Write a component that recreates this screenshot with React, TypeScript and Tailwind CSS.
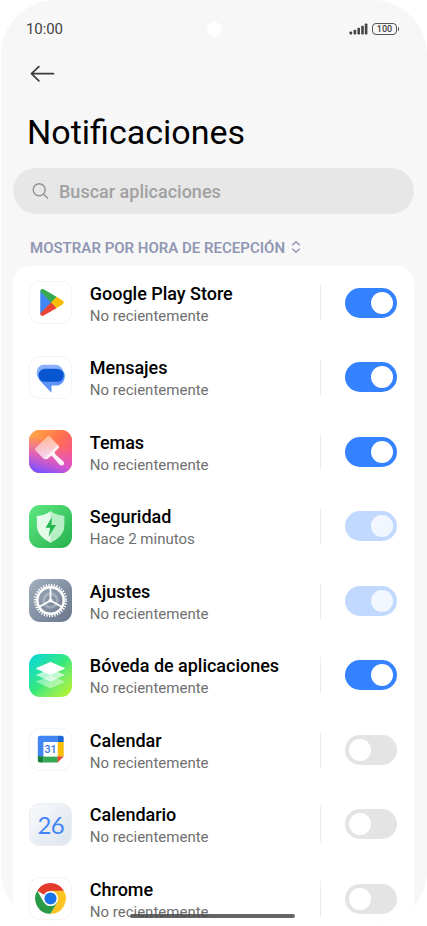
import type { ReactNode } from 'react'
import clsx from 'clsx'

type SwitchState = 'on' | 'locked' | 'off'

type AppRow = {
  name: string
  status: string
  state: SwitchState
  icon: ReactNode
}

function PlayIcon() {
  return (
    <svg viewBox="0 0 44 44" className="size-full">
      <path d="M11.500 10.200v24l12-12.400z" fill="#4285f4" />
      <path d="M11.500 10.700c0-2.200 1.700-3.200 3.500-2.200l13.500 7.800-5.700 5.900z" fill="#34a853" />
      <path d="M11.500 33.200c0 2.200 1.700 3.200 3.500 2.200l13.500-7.800-5.700-5.900z" fill="#ea4335" />
      <path d="M28.300 16.200l6 3.700c1.700 1.100 1.700 3.100 0 4.100l-6 3.700-5.700-5.700z" fill="#fbbc04" />
    </svg>
  )
}

function MessagesIcon() {
  return (
    <svg viewBox="0 0 44 44" className="size-full">
      <path d="M15 9h12.500a7.300 7.300 0 0 1 7.200 6.500L30 25H12.500a8.500 8.500 0 0 1-4.600-8.500A7.400 7.400 0 0 1 15 9z" fill="#8ab0fb" />
      <path d="M33 14a7 7 0 0 1 3.700 6.200c0 6-4 10.100-9.200 10.100H23v7.400L10 24z" fill="#5f93f8" />
      <rect x="9.700" y="13" width="25.800" height="13.400" rx="6.700" fill="#0957d0" />
    </svg>
  )
}

function ThemesIcon() {
  return (
    <svg viewBox="0 0 44 44" className="size-full">
      <defs>
        <linearGradient id="themes-bg" x1="0" y1="0" x2="1" y2="0.7">
          <stop offset="0" stopColor="#ffae43" />
          <stop offset="0.55" stopColor="#ff724d" />
          <stop offset="1" stopColor="#f8528d" />
        </linearGradient>
        <linearGradient id="themes-low" x1="0.6" y1="0.3" x2="0.35" y2="1">
          <stop offset="0" stopColor="#e45cd6" stopOpacity="0" />
          <stop offset="0.55" stopColor="#d256dd" stopOpacity="0.75" />
          <stop offset="1" stopColor="#7d51ff" />
        </linearGradient>
        <linearGradient id="themes-brush" x1="0.3" y1="0" x2="0.8" y2="1">
          <stop offset="0" stopColor="#fff" stopOpacity="0.4" />
          <stop offset="1" stopColor="#fff" stopOpacity="0.85" />
        </linearGradient>
      </defs>
      <rect width="44" height="44" fill="url(#themes-bg)" />
      <rect width="44" height="44" fill="url(#themes-low)" />
      <path d="M6.700 18.500L18.600 7q1.500-1.500 3 0L30.300 16q1.200 1.500 0 2.800L17.700 29.500q-1.500 1-2.900-.3L6.600 21q-1.200-1.200.1-2.500z" fill="url(#themes-brush)" />
      <path d="M29.800 15.500q1.300 1.600 0 3l-3 3.300q-1.100 1.600.3 3.200l7.700 6.700c3 3-.800 6.400-3.700 3.700l-6.800-8q-1.400-1.400-2.900-.1l-2.300 2q-1.800 1.300-3.300-.1z" fill="#fff2f8" />
    </svg>
  )
}

function SecurityIcon() {
  return (
    <svg viewBox="0 0 44 44" className="size-full">
      <path d="M22 6.500c4 3 8.500 4.500 14 4.700V21c0 8-6 13.500-14 17.500C14 34.500 8 29 8 21v-9.800c5.500-.2 10-1.700 14-4.700z" fill="#e4fbe9" />
      <path d="M22 6.500c4 3 8.500 4.500 14 4.700V21c0 8-6 13.500-14 17.500z" fill="#b5efc3" />
      <path d="M23.600 12.300l-6.700 11h4.700l-1.600 9.300 7.700-12.200h-4.800z" fill="#25b851" />
    </svg>
  )
}

function SettingsIcon() {
  return (
    <svg viewBox="0 0 44 44" className="size-full" fill="none">
      <circle cx="22" cy="22" r="7" stroke="#fff" strokeOpacity="0.25" strokeWidth="3" />
      <circle cx="22" cy="22" r="15.800" stroke="#fff" strokeWidth="2.400" strokeDasharray="1.350 1.408" />
      <circle cx="22" cy="22" r="13.500" stroke="#fff" strokeWidth="2.500" />
      <path d="M22 22V9M22 22L10.700 28.500M22 22l11.300 6.500" stroke="#fff" strokeWidth="1.800" />
      <circle cx="22" cy="22" r="2" fill="#fff" />
    </svg>
  )
}

function VaultIcon() {
  return (
    <svg viewBox="0 0 44 44" className="size-full" fill="#fff" stroke="#fff" strokeLinejoin="round">
      <path d="M22 22l15 6.500L22 35.200 7 28.500z" fillOpacity="0.45" stroke="none" />
      <path d="M22 15l15 6.500L22 28.200 7 21.500z" fillOpacity="0.65" stroke="none" />
      <path d="M22 8.500l14.500 6.300L22 21.100 7.500 14.800z" strokeWidth="0.800" />
    </svg>
  )
}

function GoogleCalendarIcon() {
  return (
    <svg viewBox="0 0 44 44" className="size-full">
      <path d="M11 8h18v6.500H9V10a2 2 0 0 1 2-2z" fill="#4285f4" />
      <path d="M9 14h6v15.500H9z" fill="#4285f4" />
      <path d="M29 8h4.500a2 2 0 0 1 2 2v4.500H29z" fill="#1967d2" />
      <path d="M29.200 14.300h6.300v14.900h-6.300z" fill="#fbbc04" />
      <path d="M9 29h6v6.300h-4a2 2 0 0 1-2-2z" fill="#188038" />
      <path d="M15 29h14.500v6.300H15z" fill="#34a853" />
      <path d="M29.200 29.200h6.300l-6.300 6.100z" fill="#ea4335" />
      <path d="M15 14.300h14.200v14.900H15z" fill="#fff" />
      <text x="22" y="25.700" textAnchor="middle" fontFamily="Roboto, sans-serif" fontSize="11" fontWeight="500" fill="#3478e8">
        31
      </text>
    </svg>
  )
}

function ChromeIcon() {
  return (
    <svg viewBox="0 0 44 44" className="size-full">
      <path d="M22 22L8.400 14.100A15.700 15.700 0 0 1 35.600 14.100z" fill="#e33b2e" />
      <path d="M22 14.100h13.600A15.700 15.700 0 0 1 22 37.700l6.900-11.800z" fill="#fdc422" />
      <path d="M15.100 25.900L8.400 14.100A15.700 15.700 0 0 0 22 37.700l6.900-11.800z" fill="#2a9a48" />
      <circle cx="22" cy="22" r="7.800" fill="#fff" />
      <circle cx="22" cy="22" r="6.200" fill="#1a73e8" />
    </svg>
  )
}

function Tile({ className, children }: { className: string; children: ReactNode }) {
  return <div className={clsx('size-[43px] shrink-0 overflow-hidden rounded-[11px]', className)}>{children}</div>
}

const whiteTile = 'inset-ring inset-ring-[#f5f5f5] bg-white'

const apps: AppRow[] = [
  { name: 'Google Play Store', status: 'No recientemente', state: 'on', icon: <Tile className={whiteTile}><PlayIcon /></Tile> },
  { name: 'Mensajes', status: 'No recientemente', state: 'on', icon: <Tile className={whiteTile}><MessagesIcon /></Tile> },
  { name: 'Temas', status: 'No recientemente', state: 'on', icon: <Tile className="bg-[#ff724d]"><ThemesIcon /></Tile> },
  {
    name: 'Seguridad',
    status: 'Hace 2 minutos',
    state: 'locked',
    icon: <Tile className="bg-linear-to-br from-[#5ee882] to-[#22b14c]"><SecurityIcon /></Tile>,
  },
  {
    name: 'Ajustes',
    status: 'No recientemente',
    state: 'locked',
    icon: <Tile className="bg-linear-to-br from-[#a3b0c1] to-[#68758a]"><SettingsIcon /></Tile>,
  },
  {
    name: 'Bóveda de aplicaciones',
    status: 'No recientemente',
    state: 'on',
    icon: <Tile className="bg-linear-to-br from-[#08d5dd] via-[#35e878] to-[#bdf500]"><VaultIcon /></Tile>,
  },
  { name: 'Calendar', status: 'No recientemente', state: 'off', icon: <Tile className={whiteTile}><GoogleCalendarIcon /></Tile> },
  {
    name: 'Calendario',
    status: 'No recientemente',
    state: 'off',
    icon: (
      <Tile className="flex items-center justify-center bg-linear-to-br from-[#f9fafc] to-[#dce4ed] inset-ring inset-ring-[#edf0f3]">
        <span className="pt-px font-[Lato,sans-serif] text-[24px] leading-none tracking-[-0.600px] text-[#4285f4]">26</span>
      </Tile>
    ),
  },
  { name: 'Chrome', status: 'No recientemente', state: 'off', icon: <Tile className={whiteTile}><ChromeIcon /></Tile> },
]

function Switch({ state }: { state: SwitchState }) {
  return (
    <div
      role="switch"
      aria-checked={state !== 'off'}
      className={clsx(
        'flex h-[30px] w-[52px] shrink-0 items-center rounded-full px-1',
        state === 'on' && 'justify-end bg-[#3482ff]',
        state === 'locked' && 'justify-end bg-[#c1d8ff]',
        state === 'off' && 'justify-start bg-[#e4e4e4]',
      )}
    >
      <div className={clsx('size-[22px] rounded-full', state === 'locked' ? 'bg-[#f2f7ff]' : 'bg-white')} />
    </div>
  )
}

function StatusBar() {
  return (
    <div className="flex h-[58px] items-center justify-between pr-[28px] pl-[25px] text-[#444]">
      <span className="w-[63px] text-[15px] tracking-[-0.1px]">10:00</span>
      <span className="size-[15px] rounded-full bg-white" />
      <div className="flex w-[60px] items-center justify-end">
        <svg width="19" height="12" viewBox="0 0 19 12" fill="#444">
          <rect x="0.500" y="8.500" width="2.600" height="3" rx="0.800" />
          <rect x="4.600" y="6.700" width="2.600" height="4.800" rx="0.800" />
          <rect x="8.400" y="4.700" width="2.600" height="6.800" rx="0.800" />
          <rect x="12.200" y="2.700" width="2.600" height="8.800" rx="0.800" />
          <rect x="15.800" y="0.500" width="2.600" height="11" rx="0.800" />
        </svg>
        <div className="ml-1 flex h-[12px] w-[25px] items-center justify-center rounded-[4px] border-[1.500px] border-[#555] text-[9px] leading-none font-medium">
          100
        </div>
        <span className="ml-px h-[4px] w-px rounded-r bg-[#555]" />
      </div>
    </div>
  )
}

export default function App() {
  return (
    <div className="h-[926px] w-[427px] overflow-hidden bg-white pl-px font-[Roboto,sans-serif]">
      <div className="relative h-full overflow-hidden rounded-[55px] bg-[#f7f7f7]">
        <StatusBar />

        <div className="h-[48px] pt-[7px] pl-[29px]">
          <svg width="26" height="18" viewBox="0 0 26 18" fill="none" stroke="#3c3c3c" strokeWidth="1.700">
            <path d="M8.900 1.600L1.500 8.700l7.400 7.100M1.500 8.700H23.500" strokeLinejoin="round" strokeLinecap="round" />
          </svg>
        </div>

        <h1 className="h-[62px] pl-[26px] text-[34px] leading-[52px] text-black">Notificaciones</h1>

        <div className="mx-3 mr-[13px] flex h-[46px] items-center rounded-full bg-[#e7e7e7] pl-[18px] text-[#a1a1a1]">
          <svg width="20" height="20" viewBox="0 0 20 20" fill="none" stroke="#929292" strokeWidth="1.400">
            <circle cx="8.200" cy="8.800" r="6" />
            <path d="M12.600 13.200l4.400 4.200" />
          </svg>
          <span className="ml-[8px] text-[18px] font-medium">Buscar aplicaciones</span>
        </div>

        <div className="flex h-[51.500px] items-center pt-[16px] pl-[29px] text-[15px] font-semibold text-[#9198b3]">
          <span>MOSTRAR POR HORA DE RECEPCIÓN</span>
          <svg className="mb-px ml-[6px]" width="10" height="14" viewBox="0 0 10 14" fill="none" stroke="#9198b3" strokeWidth="1.400">
            <path d="M1.200 5.200L5 1.700l3.800 3.500M1.200 8.700L5 12.200l3.800-3.500" />
          </svg>
        </div>

        <ul className="mr-[13px] ml-3 rounded-t-[17px] bg-white">
          {apps.map((app) => (
            <li key={app.name} className="flex h-[74.500px] items-center pr-[17px] pl-[16.300px]">
              {app.icon}
              <div className="ml-[17.500px] min-w-0 flex-1 pt-[4px]">
                <p className="text-[18px] leading-[22px] font-medium tracking-[-0.020px] text-black">{app.name}</p>
                <p className="text-[15px] leading-[22px] text-[#707070]">{app.status}</p>
              </div>
              <div className="mr-6 h-[36px] w-px bg-[#ededed]" />
              <Switch state={app.state} />
            </li>
          ))}
        </ul>

        {/* gesture bar */}
        <div className="absolute top-[914px] left-[129px] h-[4px] w-[165px] rounded-full bg-[#4a4a4a]/85" />
      </div>
    </div>
  )
}
